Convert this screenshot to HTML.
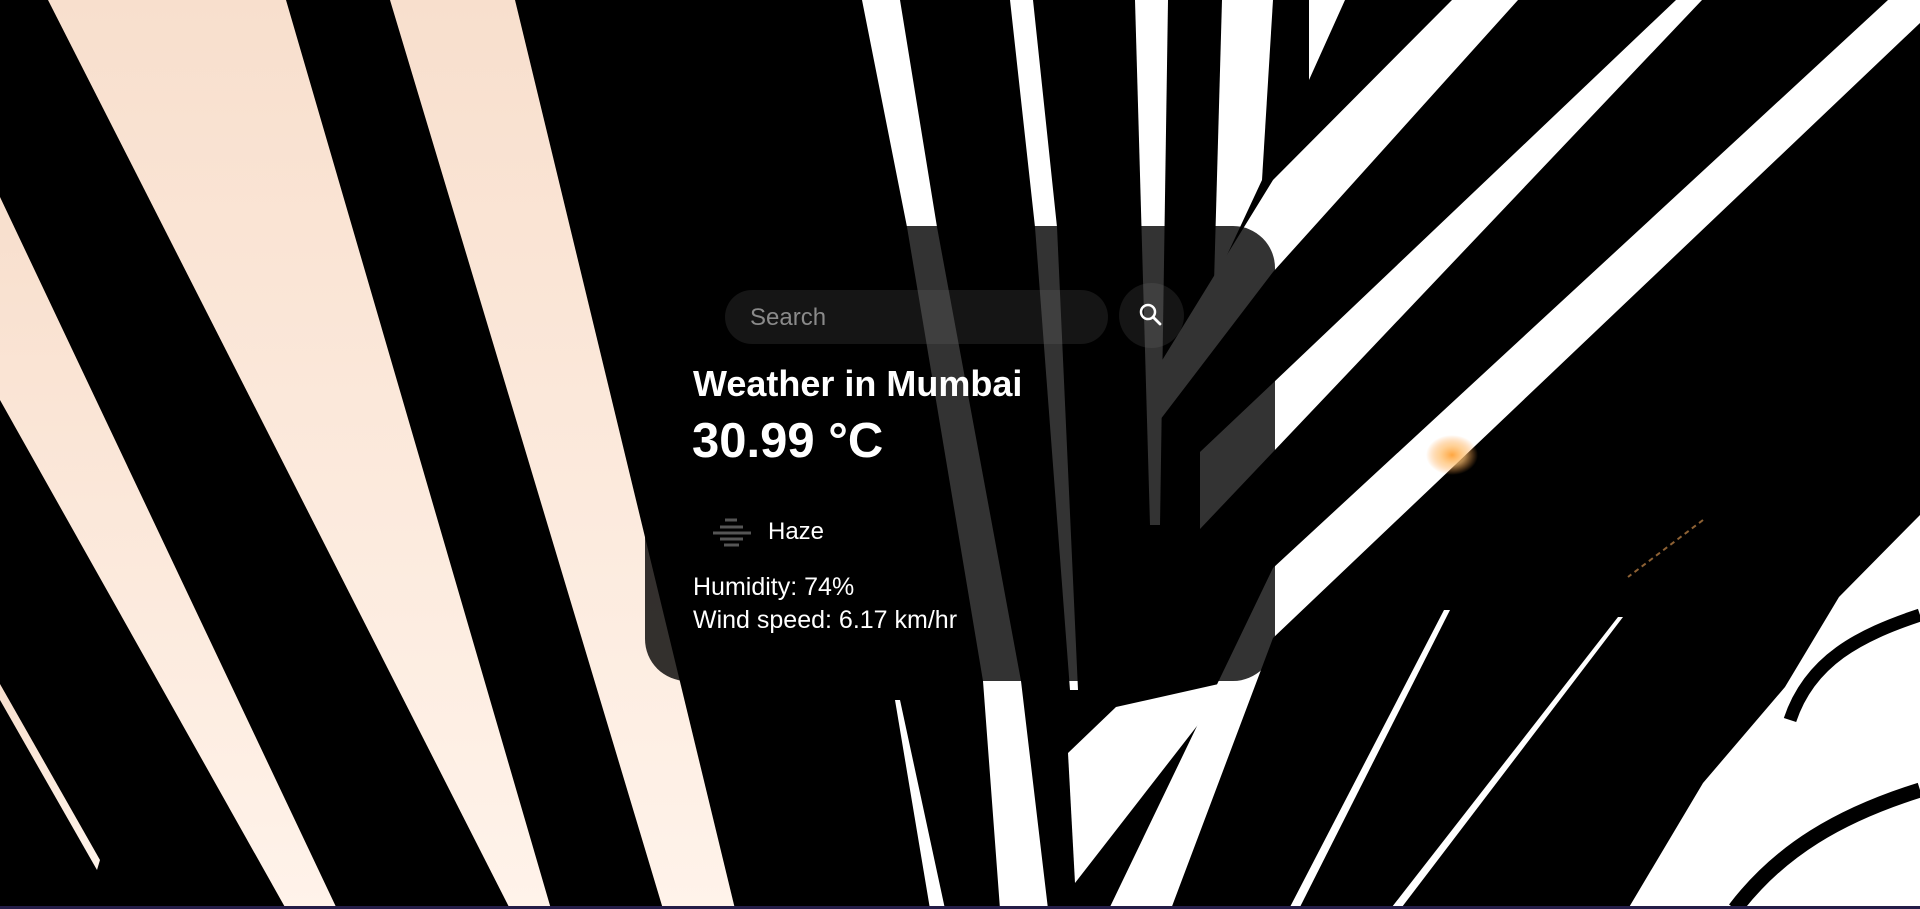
<!DOCTYPE html>
<html><head><meta charset="utf-8"><style>
html,body{margin:0;padding:0;width:1920px;height:909px;overflow:hidden;background:#000;font-family:"Liberation Sans",sans-serif;}
svg.bg{position:absolute;left:0;top:0;width:1920px;height:909px;}
.card{position:absolute;left:645px;top:226px;width:630px;height:455px;border-radius:42px;background:rgba(0,0,0,0.8);color:#fff;}
.search{position:absolute;left:80px;top:64px;width:383px;height:54px;border-radius:27px;background:rgba(124,124,124,0.17);}
.search span{position:absolute;left:25px;top:14px;font-size:24px;color:#8a8a8a;}
.btn{position:absolute;left:474px;top:57px;width:65px;height:65px;border-radius:50%;background:rgba(124,124,124,0.17);}
h1{position:absolute;left:48px;top:137px;margin:0;font-size:36px;font-weight:bold;white-space:nowrap;}
.temp{position:absolute;left:47px;top:187px;font-size:49px;font-weight:bold;}
.haze{position:absolute;left:123px;top:292px;font-size:24px;}
.icon{position:absolute;left:66px;top:291px;}
.l1{position:absolute;left:48px;top:347px;font-size:25px;}
.l2{position:absolute;left:48px;top:380px;font-size:25px;}
.bl{position:absolute;left:0;top:906px;width:1920px;height:3px;background:#241d48;}
</style></head><body>
<svg class="bg" viewBox="0 0 1920 909" preserveAspectRatio="none">
<defs>
<linearGradient id="cr" x1="0" y1="0" x2="0" y2="1"><stop offset="0" stop-color="#f8dfcd"/><stop offset="1" stop-color="#fff3ea"/></linearGradient>
<radialGradient id="gl"><stop offset="0" stop-color="#ffa640"/><stop offset="0.5" stop-color="#ffc070" stop-opacity="0.7"/><stop offset="1" stop-color="#ff9a3a" stop-opacity="0"/></radialGradient>
</defs>
<g fill="url(#cr)">
<polygon points="48,0 286,0 551,909 510,909"/>
<polygon points="0,197 0,400 286,909 337,909"/>
<polygon points="390,0 515,0 735,909 663,909"/>
<polygon points="0,684 0,700 97,870 100,860"/>
</g>
<g fill="#fff">
<polygon points="862,0 900,0 937,227 1021,681 1048,909 1000,909 983,681 907,227"/>
<polygon points="895,700 900,700 945,909 930,909"/>
<polygon points="1010,0 1033,0 1057,227 1078,690 1070,690 1035,227"/>
<polygon points="1135,0 1168,0 1160,525 1150,525"/>
<polygon points="1222,0 1273,0 1262,180 1214,283"/>
<polygon points="1309,0 1345,0 1309,80"/>
<polygon points="1452,0 1518,0 1273,272 1160,420 1150,380 1273,180"/>
<polygon points="1676,0 1702,0 1273,452 1200,529 1200,452 1273,383"/>
<polygon points="1888,0 1920,0 1920,23 1273,638 1171,909 1109,909 1273,568"/>
<polygon points="1116,707 1232,681 1075,883 1068,753"/>
<polygon points="1444,610 1450,610 1300,907 1290,907"/>
<polygon points="1618,617 1623,617 1402,907 1392,907"/>
<polygon points="1920,515 1920,909 1628,909 1703,783 1785,687 1839,597"/>
</g>
<g fill="none" stroke="#000">
<path d="M1920,615 C1860,635 1810,660 1790,720" stroke-width="13"/>
<path d="M1920,790 C1840,815 1780,850 1735,909" stroke-width="15"/>
</g>
<path d="M1703,520 L1628,577" stroke="#c98a4a" stroke-width="2" stroke-dasharray="5 4" opacity="0.7"/>
<ellipse cx="1452" cy="455" rx="26" ry="20" fill="url(#gl)"/>
</svg>
<div class="card">
<div class="search"><span>Search</span></div>
<div class="btn"><svg width="65" height="65" viewBox="0 0 65 65"><circle cx="29" cy="29" r="7" fill="none" stroke="#fff" stroke-width="2.5"/><line x1="34" y1="34" x2="41" y2="41" stroke="#fff" stroke-width="2.8" stroke-linecap="round"/></svg></div>
<h1>Weather in Mumbai</h1>
<div class="temp">30.99 °C</div>
<svg class="icon" width="42" height="32" viewBox="0 0 42 32"><g stroke="#555" stroke-width="3"><line x1="14" y1="3" x2="26" y2="3"/><line x1="9" y1="10" x2="32" y2="10"/><line x1="2" y1="16" x2="40" y2="16"/><line x1="9" y1="22" x2="32" y2="22"/><line x1="13" y1="28" x2="28" y2="28"/></g></svg>
<div class="haze">Haze</div>
<div class="l1">Humidity: 74%</div>
<div class="l2">Wind speed: 6.17 km/hr</div>
</div>
<div class="bl"></div>
</body></html>
